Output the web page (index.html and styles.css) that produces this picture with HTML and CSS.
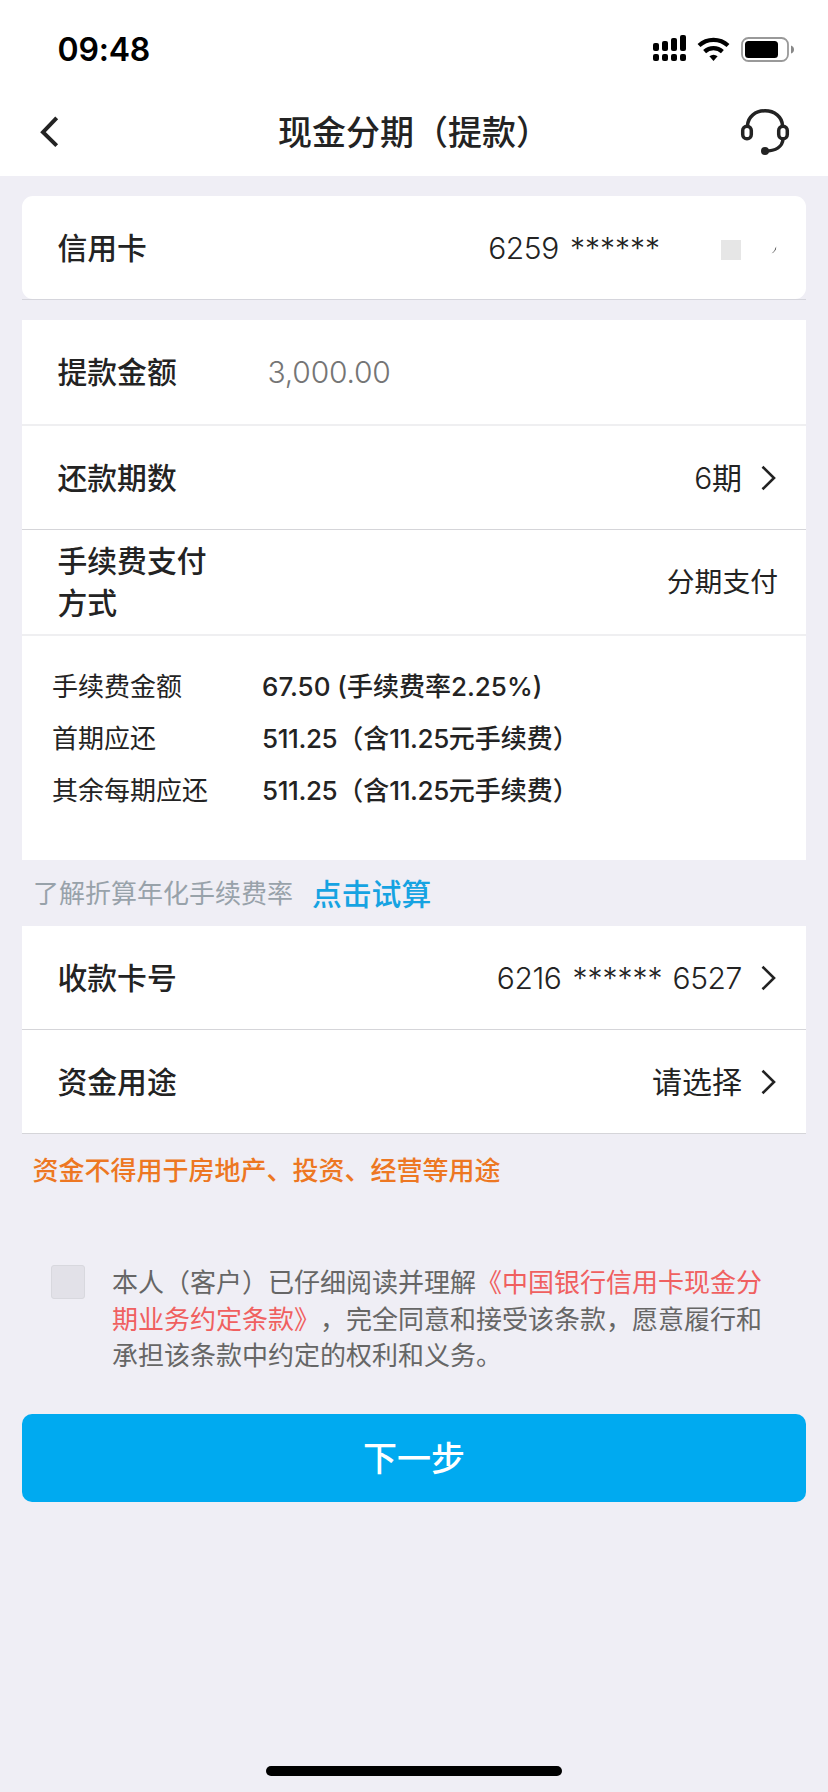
FILE: index.html
```html
<!DOCTYPE html>
<html lang="zh-CN">
<head>
<meta charset="utf-8">
<title>现金分期（提款）</title>
<link rel="stylesheet" href="styles.css">
</head>
<body>
<div class="screen">
  <header class="header">
    <div class="status">
      <span class="time">09:48</span>
      <svg class="status-icons" width="142" height="28" viewBox="0 0 142 28">
        <g fill="#000">
          <rect x="0" y="8" width="6" height="8" rx="2"/><rect x="9" y="6" width="6" height="10" rx="2"/>
          <rect x="18" y="3" width="6" height="13" rx="2"/><rect x="27" y="0" width="6" height="16" rx="2"/>
          <rect x="0" y="19" width="6" height="7" rx="2"/><rect x="9" y="19" width="6" height="7" rx="2"/>
          <rect x="18" y="19" width="6" height="7" rx="2"/><rect x="27" y="19" width="6" height="7" rx="2"/>
        </g>
        <g fill="none" stroke="#000" stroke-width="4.2">
          <path d="M46 10.600a21 21 0 0 1 29 0"/>
          <path d="M51.600 16.600a13 13 0 0 1 17.800 0"/>
        </g>
        <path d="M56.400 21.300a6.500 6.500 0 0 1 8.200 0L60.500 26z" fill="#000"/>
        <rect x="89" y="3" width="46" height="23" rx="6.500" fill="none" stroke="#999" stroke-width="1.800"/>
        <rect x="92" y="6" width="33" height="17" rx="3.500" fill="#000"/>
        <path d="M138 10.500q3 1 3 4t-3 4z" fill="#888"/>
      </svg>
    </div>
    <nav class="nav">
      <svg class="back" width="20" height="32" viewBox="0 0 20 32"><path d="M16.700 1.800L3 16.200L16.700 29.600" fill="none" stroke="#232323" stroke-width="4"/></svg>
      <h1 class="title">现金分期（提款）</h1>
      <svg class="service" width="50" height="48" viewBox="0 0 50 48" fill="none" stroke="#232323" stroke-width="3.500">
        <path d="M7.500 17.500C8 8.500 15.500 2.800 25 2.800S42 8.500 42.500 17.500"/>
        <rect x="2.700" y="18.200" width="8.600" height="12.600" rx="4.300"/>
        <rect x="38.700" y="18.200" width="8.600" height="12.600" rx="4.300"/>
        <path d="M43 31C42.500 38.500 36 43 25 43"/>
        <circle cx="25" cy="43" r="4" fill="#232323" stroke="none"/>
      </svg>
    </nav>
  </header>

  <main class="main">
    <section class="card-wrap">
      <div class="card row rounded">
        <span class="label">信用卡</span>
        <span class="masked"><span class="num">6259</span><span class="stars">******</span><span class="block"></span><svg class="tick" width="6" height="10" viewBox="0 0 6 10"><path d="M.500 8.500Q4 6 5.200 1.500Q5.500 6 .500 8.500z" fill="#333"/></svg></span>
      </div>
    </section>

    <section class="card group">
      <div class="row soft">
        <span class="label">提款金额</span>
        <span class="amount">3,000.00</span>
      </div>
      <div class="row line">
        <span class="label">还款期数</span>
        <span class="value"><span class="num">6</span>期</span>
        <svg class="chevron" width="16" height="26" viewBox="0 0 16 26"><path d="M1.500 1.700L13 13L1.500 24.300" fill="none" stroke="#222" stroke-width="2.600"/></svg>
      </div>
      <div class="row soft">
        <span class="label narrow">手续费支付方式</span>
        <span class="value plain">分期支付</span>
      </div>
      <dl class="details">
        <dt>手续费金额</dt><dd class="rate">67.50 (手续费率2.25%)</dd>
        <dt>首期应还</dt><dd><span class="fig">511.25</span>（含<span class="fig">11.25</span>元手续费）</dd>
        <dt>其余每期应还</dt><dd><span class="fig">511.25</span>（含<span class="fig">11.25</span>元手续费）</dd>
      </dl>
    </section>

    <p class="hint">了解折算年化手续费率<a class="calc">点击试算</a></p>

    <section class="card">
      <div class="row line">
        <span class="label">收款卡号</span>
        <span class="value pan"><span class="num">6216</span><span class="stars">******</span><span class="num">6527</span></span>
        <svg class="chevron" width="16" height="26" viewBox="0 0 16 26"><path d="M1.500 1.700L13 13L1.500 24.300" fill="none" stroke="#222" stroke-width="2.600"/></svg>
      </div>
      <div class="row line">
        <span class="label">资金用途</span>
        <span class="value">请选择</span>
        <svg class="chevron" width="16" height="26" viewBox="0 0 16 26"><path d="M1.500 1.700L13 13L1.500 24.300" fill="none" stroke="#222" stroke-width="2.600"/></svg>
      </div>
    </section>

    <p class="warning">资金不得用于房地产、投资、经营等用途</p>

    <div class="agree">
      <span class="checkbox"></span>
      <p class="terms">本人（客户）已仔细阅读并理解<a class="link">《中国银行信用卡现金分<br>期业务约定条款》</a>，完全同意和接受该条款，愿意履行和<br>承担该条款中约定的权利和义务。</p>
    </div>

    <button class="next">下一步</button>
  </main>
  <footer class="home"><span class="bar"></span></footer>
</div>
</body>
</html>
```
FILE: styles.css
```css
* { box-sizing: border-box; margin: 0; padding: 0; }
body { background: #efeef5; font-family: Inter, "Noto Sans CJK SC", sans-serif; color: #232323; text-spacing-trim: space-all; }
.screen { width: 828px; height: 1792px; display: flex; flex-direction: column; overflow: hidden; }
.header { height: 176px; background: #fff; flex: none; }
.status { height: 88px; padding: 35px 32px 0 57.500px; display: flex; justify-content: space-between; align-items: flex-start; }
.time { font-size: 32px; font-weight: 600; line-height: 30px; color: #000; letter-spacing: -0.2px; }
.status-icons { margin-right: 1px; display: block; }
.nav { height: 88px; padding: 0 38px 0 40px; display: flex; align-items: center; }
.back { width: 20px; }
.title { margin: 0 auto 3px 218px; font-family: "Noto Sans CJK SC", sans-serif; font-size: 34px; font-weight: 500; line-height: 48px; }
.main { padding: 20px 22px 0; flex: 1; }
.card-wrap { border-bottom: 1px solid #d5d5dc; margin-bottom: 20px; }
.card { background: #fff; }
.rounded { border-radius: 11px; }
.row { height: 103px; padding: 0 29px 0 35.500px; display: flex; align-items: center; }
.row.soft { height: 106px; border-bottom: 2px solid #efeff1; }
.row.line { height: 104px; border-bottom: 1px solid #d5d5d9; }
.label { font-size: 29.800px; font-weight: 500; line-height: 42px; width: 210px; }
.narrow { width: 160px; }
.value { margin-left: auto; font-size: 30px; line-height: 42px; }
.plain { font-size: 27.800px; margin-right: -1px; }
.chevron { margin-left: 19px; }
.masked { margin-left: auto; display: flex; align-items: center; font-size: 30px; }
.num { font-weight: 350; letter-spacing: -0.4px; }
.stars { font-weight: 350; margin: 0 10px 0 11px; letter-spacing: 0; }
.block { width: 20px; height: 20px; margin: 4px 30px 0 51px; background: #e6e6e6; }
.tick { margin: 4px 0 0; }
.pan { display: flex; }
.amount { font-size: 30px; font-weight: 350; letter-spacing: -0.2px; color: #757575; }
.details { height: 224px; padding: 25px 30px 0; display: grid; grid-template-columns: 210px 1fr; grid-auto-rows: 52px; font-size: 26px; line-height: 52px; }
.details dd { font-weight: 500; white-space: nowrap; }
.fig { letter-spacing: -0.4px; }
.hint { height: 66px; padding: 0 0 3px 11px; display: flex; align-items: center; font-size: 26px; color: #98a2aa; }
.calc { margin-left: 19px; font-size: 29.800px; font-weight: 500; color: #16a3e2; }
.warning { height: 72px; line-height: 73px; padding-left: 10.500px; font-size: 26px; font-weight: 500; color: #ed7722; }
.agree { display: flex; padding: 59px 0 0 29px; height: 208px; }
.checkbox { width: 34px; height: 34px; border: 1px solid #d8d8de; border-radius: 3px; background: #e2e1e8; }
.terms { margin: -2px 0 0 27px; font-size: 26px; line-height: 36.500px; color: #666; white-space: nowrap; font-family: "Noto Sans CJK SC", sans-serif; }
.link { color: #f06060; }
.next { display: block; width: 784px; height: 88px; border: 0; border-radius: 10px; background: #00aaf0; color: #fff; font: 500 34px/86px "Noto Sans CJK SC", sans-serif; padding-bottom: 2px; }
.home { height: 26px; display: flex; justify-content: center; flex: none; }
.bar { width: 296px; height: 10px; border-radius: 5px; background: #000; }
```
